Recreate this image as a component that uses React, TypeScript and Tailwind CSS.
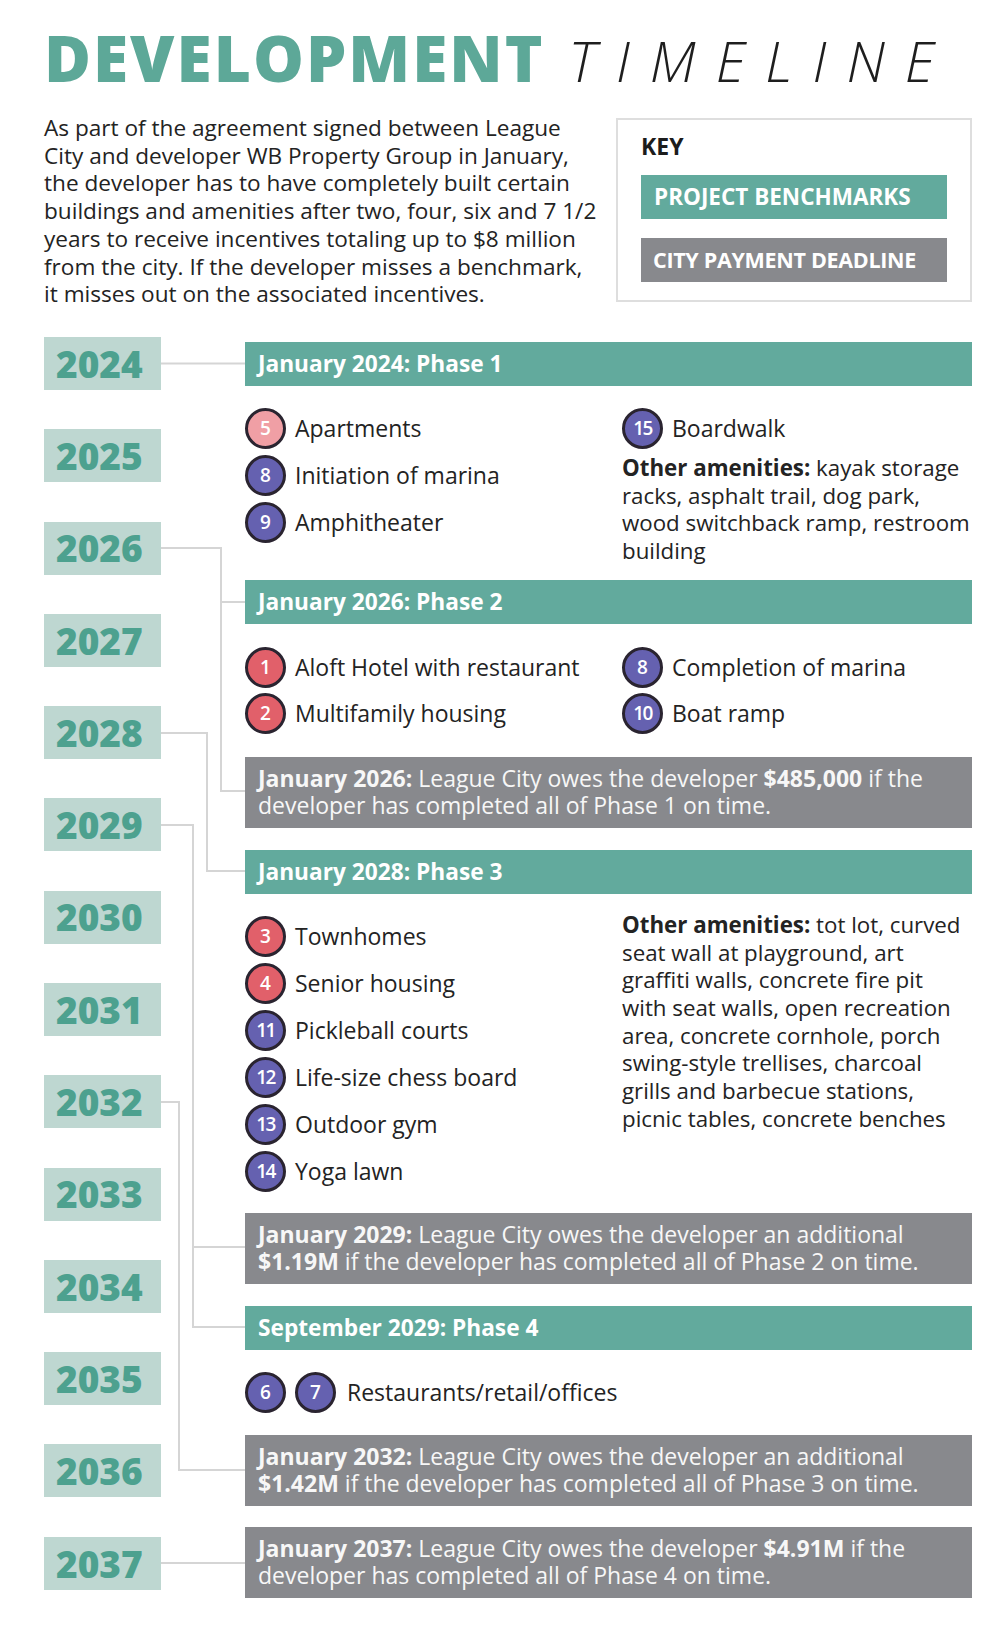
import type { ReactNode } from 'react';

type Tone = 'pink' | 'red' | 'purple';

const TONE_BG: Record<Tone, string> = {
  pink: 'bg-[#f09fa5]',
  red: 'bg-[#e1606a]',
  purple: 'bg-[#6561b0]',
};

const YEARS = [2024, 2025, 2026, 2027, 2028, 2029, 2030, 2031, 2032, 2033, 2034, 2035, 2036, 2037];

const INTRO = [
  'As part of the agreement signed between League',
  'City and developer WB Property Group in January,',
  'the developer has to have completely built certain',
  'buildings and amenities after two, four, six and 7 1/2',
  'years to receive incentives totaling up to $8 million',
  'from the city. If the developer misses a benchmark,',
  'it misses out on the associated incentives.',
];

function Badge({ n, tone }: { n: number; tone: Tone }) {
  return (
    <span
      className={`flex h-[41px] w-[41px] shrink-0 items-center justify-center rounded-full border-[3px] border-[#2a2430] ${TONE_BG[tone]} text-[19px] font-semibold leading-none text-white ${n > 9 ? 'tracking-[-1.5px]' : ''}`}
    >
      {n}
    </span>
  );
}

function Item({ n, tone, label }: { n: number; tone: Tone; label: string }) {
  return (
    <div className="flex h-[41px] items-center gap-[9px]">
      <Badge n={n} tone={tone} />
      <span className="whitespace-nowrap">{label}</span>
    </div>
  );
}

function PhaseBar({ children, className = '' }: { children: ReactNode; className?: string }) {
  return (
    <div className={`flex h-[44px] items-center bg-[#62aa9d] px-[13px] text-[22.7px] font-bold text-white ${className}`}>
      {children}
    </div>
  );
}

function Payment({ label, lines, className = '' }: { label: string; lines: ReactNode[]; className?: string }) {
  return (
    <div className={`flex h-[71px] flex-col justify-center bg-[#88898d] px-[13px] text-[23px] leading-[27.5px] text-[#f7f7f7] ${className}`}>
      <p className="whitespace-nowrap">
        <b className="font-bold">{label}</b> {lines[0]}
      </p>
      <p className="whitespace-nowrap">{lines[1]}</p>
    </div>
  );
}

function Amenities({ lines }: { lines: string[] }) {
  return (
    <div className="text-[22.3px] leading-[27.7px]">
      {lines.map((l, i) => (
        <p key={i} className="whitespace-nowrap">
          {i === 0 && <b className="font-bold">Other amenities: </b>}
          {l}
        </p>
      ))}
    </div>
  );
}

function Connectors() {
  // gutter between the year column and the phase column
  const d = [
    'M0 26.5 H84',
    'M0 211 H60 V454 H84',
    'M60 265 H84',
    'M0 396 H46 V534 H84',
    'M0 488 H32 V990 H84',
    'M32 910 H84',
    'M0 765 H18 V1133 H84',
    'M0 1226 H84',
  ];
  return (
    <svg width="84" height="1261" viewBox="0 0 84 1261" className="shrink-0" fill="none">
      {d.map((p) => (
        <path key={p} d={p} stroke="#d5d5d5" strokeWidth="2" />
      ))}
    </svg>
  );
}

export default function App() {
  return (
    <div className="min-h-screen bg-white pb-[24px] pl-[44px] pr-[28px] pt-[26px] font-['Open_Sans','Noto_Sans',sans-serif] text-[#232323]">
      {/* Title */}
      <h1 className="flex items-baseline whitespace-nowrap leading-none">
        <span className="text-[64px] font-extrabold tracking-[2px] text-[#5da898]">DEVELOPMENT</span>
        <span className="ml-[24px] text-[56px] font-light italic tracking-[20px] text-[#1e1e1e]">TIMELINE</span>
      </h1>

      {/* Intro + key */}
      <div className="mt-[24px] flex items-start justify-between">
        <div className="text-[22.6px] leading-[27.7px]">
          {INTRO.map((l) => (
            <p key={l} className="whitespace-nowrap">
              {l}
            </p>
          ))}
        </div>
        <div className="mt-[4px] w-[356px] shrink-0 border-2 border-[#dedede] px-[23px] pb-[18px] pt-[12px]">
          <p className="text-[23px] font-bold leading-[28px] text-[#1c1c1c]">KEY</p>
          <div className="mt-[15px] flex h-[44px] items-center whitespace-nowrap bg-[#62aa9d] px-[13px] text-[22.5px] font-bold text-white">
            PROJECT BENCHMARKS
          </div>
          <div className="mt-[19px] flex h-[44px] items-center whitespace-nowrap bg-[#88898d] px-[12px] text-[21.5px] font-bold tracking-[-0.3px] text-white">
            CITY PAYMENT DEADLINE
          </div>
        </div>
      </div>

      {/* Timeline */}
      <div className="mt-[29px] flex items-start">
        <div className="flex w-[117px] shrink-0 flex-col gap-[39.3px]">
          {YEARS.map((y) => (
            <div key={y} className="flex h-[53px] items-center bg-[#bed7d1] pl-[12px] text-[37px] font-extrabold text-[#4da18f]">
              {y}
            </div>
          ))}
        </div>

        <Connectors />

        <div className="mt-[5px] flex w-[727px] shrink-0 flex-col text-[23px]">
          <PhaseBar>January 2024: Phase 1</PhaseBar>
          <div className="mt-[22px] grid h-[157px] grid-cols-[377px_1fr]">
            <div className="flex flex-col gap-[6px]">
              <Item n={5} tone="pink" label="Apartments" />
              <Item n={8} tone="purple" label="Initiation of marina" />
              <Item n={9} tone="purple" label="Amphitheater" />
            </div>
            <div className="flex flex-col gap-[5px]">
              <Item n={15} tone="purple" label="Boardwalk" />
              <Amenities
                lines={['kayak storage', 'racks, asphalt trail, dog park,', 'wood switchback ramp, restroom', 'building']}
              />
            </div>
          </div>

          <PhaseBar className="mt-[15px]">January 2026: Phase 2</PhaseBar>
          <div className="mt-[23px] grid grid-cols-[377px_1fr]">
            <div className="flex flex-col gap-[5px]">
              <Item n={1} tone="red" label="Aloft Hotel with restaurant" />
              <Item n={2} tone="red" label="Multifamily housing" />
            </div>
            <div className="flex flex-col gap-[5px]">
              <Item n={8} tone="purple" label="Completion of marina" />
              <Item n={10} tone="purple" label="Boat ramp" />
            </div>
          </div>

          <Payment
            className="mt-[23px]"
            label="January 2026:"
            lines={[
              <>League City owes the developer <b className="font-bold">$485,000</b> if the</>,
              'developer has completed all of Phase 1 on time.',
            ]}
          />

          <PhaseBar className="mt-[22px]">January 2028: Phase 3</PhaseBar>
          <div className="mt-[22px] grid grid-cols-[377px_1fr]">
            <div className="flex flex-col gap-[6px]">
              <Item n={3} tone="red" label="Townhomes" />
              <Item n={4} tone="red" label="Senior housing" />
              <Item n={11} tone="purple" label="Pickleball courts" />
              <Item n={12} tone="purple" label="Life-size chess board" />
              <Item n={13} tone="purple" label="Outdoor gym" />
              <Item n={14} tone="purple" label="Yoga lawn" />
            </div>
            <div className="-mt-[5px]">
              <Amenities
                lines={[
                  'tot lot, curved',
                  'seat wall at playground, art',
                  'graffiti walls, concrete fire pit',
                  'with seat walls, open recreation',
                  'area, concrete cornhole, porch',
                  'swing-style trellises, charcoal',
                  'grills and barbecue stations,',
                  'picnic tables, concrete benches',
                ]}
              />
            </div>
          </div>

          <Payment
            className="mt-[21px]"
            label="January 2029:"
            lines={[
              'League City owes the developer an additional',
              <><b className="font-bold">$1.19M</b> if the developer has completed all of Phase 2 on time.</>,
            ]}
          />

          <PhaseBar className="mt-[22px]">September 2029: Phase 4</PhaseBar>
          <div className="mt-[22px] flex h-[41px] items-center">
            <Badge n={6} tone="purple" />
            <span className="ml-[9px]">
              <Badge n={7} tone="purple" />
            </span>
            <span className="ml-[11px] whitespace-nowrap">Restaurants/retail/offices</span>
          </div>

          <Payment
            className="mt-[22px]"
            label="January 2032:"
            lines={[
              'League City owes the developer an additional',
              <><b className="font-bold">$1.42M</b> if the developer has completed all of Phase 3 on time.</>,
            ]}
          />

          <Payment
            className="mt-[21px]"
            label="January 2037:"
            lines={[
              <>League City owes the developer <b className="font-bold">$4.91M</b> if the</>,
              'developer has completed all of Phase 4 on time.',
            ]}
          />
        </div>
      </div>
    </div>
  );
}
